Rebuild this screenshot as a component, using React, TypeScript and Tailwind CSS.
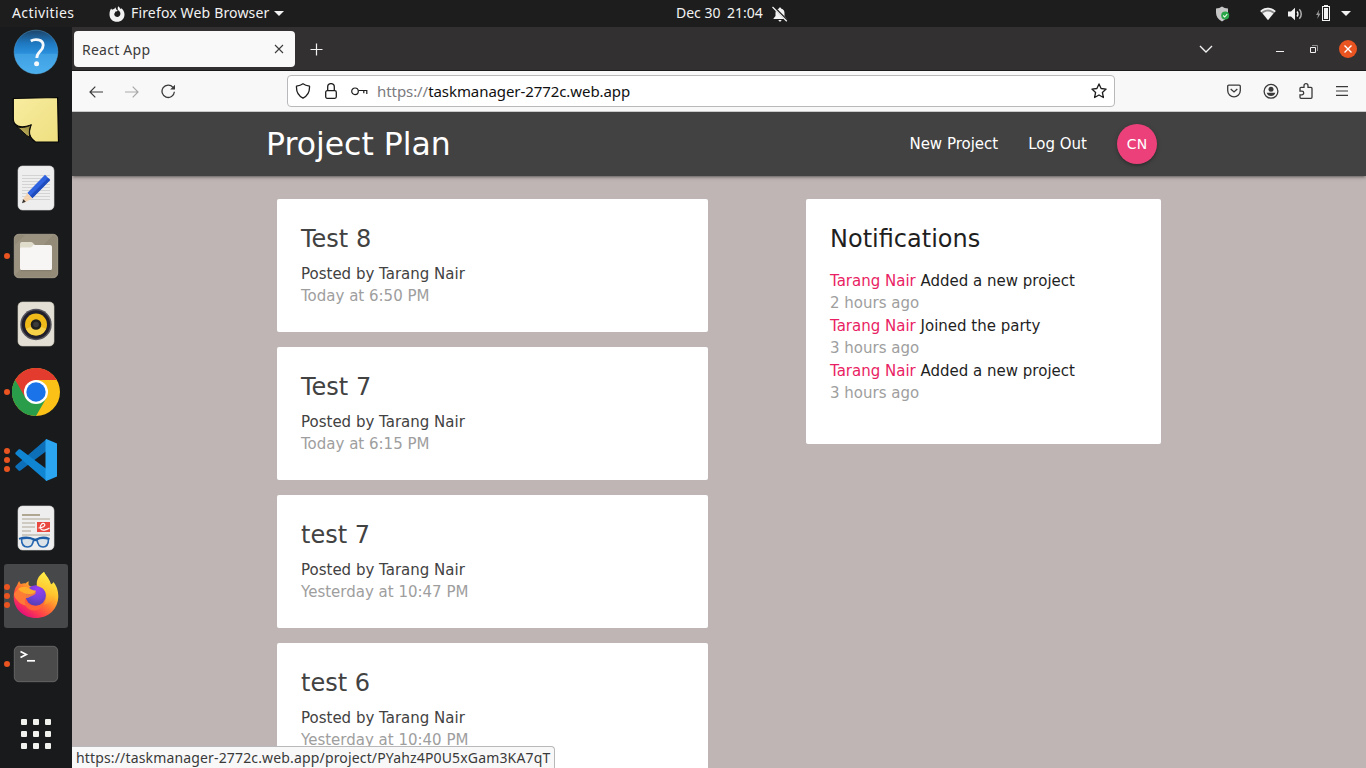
import React from 'react';

const ui = "font-['Noto_Sans',sans-serif]";

const projects = [
  { title: 'Test 8', when: 'Today at 6:50 PM' },
  { title: 'Test 7', when: 'Today at 6:15 PM' },
  { title: 'test 7', when: 'Yesterday at 10:47 PM' },
  { title: 'test 6', when: 'Yesterday at 10:40 PM' },
];

const notifications = [
  { user: 'Tarang Nair', text: 'Added a new project', when: '2 hours ago' },
  { user: 'Tarang Nair', text: 'Joined the party', when: '3 hours ago' },
  { user: 'Tarang Nair', text: 'Added a new project', when: '3 hours ago' },
];

function Caret() {
  return (
    <svg width="10" height="5" viewBox="0 0 10 5" className="shrink-0">
      <path d="M0 0h10L5 5z" fill="#f2f2f2" />
    </svg>
  );
}

function TopBar() {
  return (
    <header className={`flex h-[27px] shrink-0 items-center bg-[#1d1d1d] text-[14px] leading-[25px] text-[#f2f2f2] ${ui}`}>
      <span className="w-[97px] pb-[2px] pl-3 tracking-[0.4px]">Activities</span>
      <div className="flex w-[579px] items-center pl-3">
        <svg width="16" height="16" viewBox="0 0 16 16" className="mr-[6px]">
          <path
            d="M9.3 0.2c1 .8 1.7 1.7 2 2.7l.9-.7c1.8 1.200 3.300 3.300 3.300 6.200 0 4.200-3.300 7.400-7.500 7.400S.5 12.500.5 8.400c0-2.500.7-4.500 1.600-5.900l.9 1.300c.7-.5 1.400-.7 2.200-.7.3-.8 1-1.300 1.600-1.500-.2.9.2 1.800 1.100 2.400l.8.400c-.3.9-1.300 1-2.100 1.200-.5.200-.4.7-.6 1.200-.8.7-.9 1.600-.5 2.500.6 1.100 1.500 1.700 2.700 1.700 1.800 0 3.200-1.400 3.200-3.200 0-1.600-1-2.500-1.900-3.200C8.500 3.500 8.300 1.700 9.300.2z"
            fill="#f2f2f2"
          />
        </svg>
        <span className="mr-[5px] w-[138px] pb-[2px] tracking-[0.16px] whitespace-nowrap">Firefox Web Browser</span>
        <Caret />
      </div>
      <span className="w-[51px] pb-[2px]">Dec 30</span>
      <span className="w-[45px] pb-[2px]">21:04</span>
      <svg width="16" height="16" viewBox="0 0 16 16">
        <path d="M8 1.500a1.300 1.300 0 0 1 1.300 1.200C11.500 3.200 12.500 5 12.500 7v3l2 2.500v.5h-13v-.5l2-2.500V7c0-2 1-3.800 3.200-4.300A1.300 1.300 0 0 1 8 1.500zM6.500 14h3c0 .9-.7 1.500-1.500 1.500S6.500 14.900 6.500 14z" fill="#f2f2f2" />
        <path d="M1.200.6 15.200 14.600" stroke="#1d1d1d" strokeWidth="2.400" />
        <path d="M.5 1 14.800 15.300" stroke="#f2f2f2" strokeWidth="1.300" />
      </svg>
      <div className="ml-auto flex items-center pr-[15px]">
        <svg width="15" height="16" viewBox="0 0 15 16" className="mr-[29px]">
          <path d="M6 .5c1.800 1.300 3.600 1.900 6 2v4c0 4-2 7-6 9-4-2-6-5-6-9v-4c2.400-.1 4.200-.7 6-2z" fill="#c6c6c6" />
          <circle cx="9.200" cy="9.500" r="4" fill="#2aa548" />
          <path d="m7.200 9.500 1.500 1.500 2.500-2.800" stroke="#e8ffe8" strokeWidth="1.100" fill="none" />
        </svg>
        <svg width="16" height="14" viewBox="0 0 16 14" className="mr-[12px]">
          <path d="M.3 4C5-.2 11-.2 15.700 4L8 13.300z" fill="#8a8a8a" />
          <path d="M.3 4C5-.2 11-.2 15.700 4l-1 1.200C10.500 1.500 5.500 1.500 1.300 5.200z" fill="#f2f2f2" />
          <path d="M2.800 6.400C6 3.800 10 3.800 13.200 6.400L8 13z" fill="#f2f2f2" />
        </svg>
        <svg width="16" height="14" viewBox="0 0 16 14" className="mr-[12px]">
          <path d="M0 4.500h3L7 .8v12.400L3 9.500H0z" fill="#f2f2f2" />
          <path d="M9 4.500c1.200 1.300 1.200 3.700 0 5" stroke="#f2f2f2" strokeWidth="1.500" fill="none" />
          <path d="M11.300 2.200c2.600 2.600 2.600 7 0 9.600" stroke="#b0b0b0" strokeWidth="1.500" fill="none" />
        </svg>
        <svg width="15" height="16" viewBox="0 0 15 16" className="mr-[10px] -mt-px">
          <path d="M3.300 4.500 0 10h2l-.7 4L4.500 8.500h-2z" fill="#9a9a9a" />
          <path d="M8 0h4v1h2v15H6V1h2z" fill="#f2f2f2" />
          <path d="M7 2h6v13H7z" fill="#1d1d1d" />
          <path d="M8 3h4v11H8z" fill="#f2f2f2" />
        </svg>
        <Caret />
      </div>
    </header>
  );
}

function HelpIcon() {
  return (
    <svg width="46" height="46" viewBox="0 0 46 46">
      <defs>
        <linearGradient id="help" x1="0" y1="0" x2="0" y2="1">
          <stop offset="0" stopColor="#1d4468" />
          <stop offset=".3" stopColor="#1e78c0" />
          <stop offset=".53" stopColor="#2a8fdc" />
          <stop offset=".55" stopColor="#3f9fe3" />
          <stop offset="1" stopColor="#4cb0ee" />
        </linearGradient>
      </defs>
      <circle cx="23" cy="23" r="21.900" fill="url(#help)" stroke="#5caee2" strokeWidth=".4" />
      <path d="M17.800 12c3.500-2.200 12.400-2.300 12.400 4.300 0 6-6.400 6-6.400 12.700" stroke="#f5f9fc" strokeWidth="2.800" fill="none" />
      <circle cx="23.600" cy="34.800" r="2.500" fill="#f5f9fc" />
    </svg>
  );
}

function NoteIcon() {
  return (
    <svg width="48" height="48" viewBox="0 0 48 48">
      <defs>
        <linearGradient id="note" x1="0" y1="0" x2="1" y2="1">
          <stop offset="0" stopColor="#f8eca0" />
          <stop offset="1" stopColor="#eedf80" />
        </linearGradient>
        <linearGradient id="fold" x1="1" y1="0" x2="0" y2="1">
          <stop offset="0" stopColor="#8f8238" />
          <stop offset="1" stopColor="#d5c56c" />
        </linearGradient>
      </defs>
      <path d="M1.300 2.500 45.600 1.500l.9 44.500H23.500C20 43.500 17 39 17.500 35c.2-2 .8-4 1.500-6-4 1.500-9 2.800-13 1C2.500 28.500 1.300 26 1.300 23z" fill="url(#note)" stroke="#050505" strokeWidth="1.200" />
      <path d="M4.500 30.500c4 2 10 .8 14.500-1.500-2 4-2 8.500-1.200 12.500C13 39 9 33.500 4.500 30.500z" fill="url(#fold)" stroke="#0a0a0a" strokeWidth="1" />
    </svg>
  );
}

function PencilIcon() {
  return (
    <svg width="38" height="46" viewBox="0 0 38 46">
      <rect x="1" y="1" width="36" height="44" rx="4.500" fill="#eeeeee" stroke="#d8d8d8" strokeWidth=".6" />
      <path d="M5 10.500h28M5 13.500h28M5 16.500h28M5 19.500h28M5 22.500h28M5 25.500h28M5 28.500h28M5 31.500h28M5 34.500h28" stroke="#cfcfcf" strokeWidth=".9" />
      <path d="m28 9.800 5.200 5.200-17.900 18.200-5-5.200z" fill="#2f63e0" />
      <path d="m31 13 2.200 2-17.900 18.200-2.200-2.200z" fill="#1f4bbd" />
      <path d="m10.300 28 5 5.200-8 4.600-2-2z" fill="#f3d3b0" />
      <path d="m6.300 34.300 2.500 2.500L5 38.200z" fill="#333" />
    </svg>
  );
}

function FilesIcon() {
  return (
    <svg width="46" height="46" viewBox="0 0 46 46">
      <rect x="1.300" y="1.300" width="43.400" height="43.400" rx="4.500" fill="#938a78" stroke="#aea796" strokeWidth=".8" />
      <path d="M2 12 12 2h28L2 42z" fill="#9e9583" opacity=".7" />
      <path d="M7 11.500c0-2 1-2.500 2.500-2.500H18c1.500 0 2 1 4 3v8H7z" fill="#e0dccc" />
      <path d="M7 16c0-.8.700-1.500 1.500-1.500H17c2.500 0 2.500-2.500 4-2.500h16c1.200 0 2 .8 2 2v21c0 1.500-.8 2.300-2 2.300H9c-1.200 0-2-.8-2-2z" fill="#f7f6f4" />
      <path d="M8 37.600h30" stroke="#6f6858" strokeWidth=".7" />
    </svg>
  );
}

function SpeakerIcon() {
  return (
    <svg width="38" height="46" viewBox="0 0 38 46">
      <rect x="1" y="1" width="36" height="44" rx="4.500" fill="#e3dfd4" stroke="#d2cdc0" strokeWidth=".6" />
      <circle cx="19" cy="23.500" r="15.700" fill="#55545c" />
      <circle cx="19" cy="23.500" r="14.200" fill="#201f2b" />
      <circle cx="19" cy="23.500" r="11" fill="#efba1a" />
      <path d="M9 28a11 11 0 0 0 20 0L19 23.500z" fill="#f7d04a" />
      <circle cx="19" cy="23.500" r="5.300" fill="#20201f" />
      <circle cx="19" cy="23.500" r="2.800" fill="#3b3b3b" />
    </svg>
  );
}

function ChromeIcon() {
  return (
    <svg width="48" height="48" viewBox="0 0 48 48">
      <circle cx="24" cy="24" r="24" fill="#fbc116" />
      <path d="M24 24 34.400 30 24 48A24 24 0 0 1 3.200 12z" fill="#2a9d4a" />
      <path d="M3.200 12A24 24 0 0 1 44.800 12H24l-10.400 18z" fill="#e33b2e" />
      <circle cx="24" cy="24" r="12" fill="#fff" />
      <circle cx="24" cy="24" r="9.700" fill="#1a73e8" />
    </svg>
  );
}

function CodeIcon() {
  return (
    <svg width="42" height="42" viewBox="0 0 42 42">
      <path d="M1.200 26.300 31.500 0v12L5.500 31.500c-.7.500-1.500.5-2 0L.8 28.800c-.8-.8-.6-1.700.4-2.500z" fill="#0d6fb8" />
      <path d="M1.200 15.700 31.500 42V30L5.500 10.500c-.7-.5-1.500-.5-2 0L.8 13.200c-.8.8-.6 1.700.4 2.500z" fill="#1086d2" />
      <path d="M31.300 0 42 4.500v33L31.300 42c-.8-.4-.8-1.500-.8-2V2c0-1 .2-1.700.8-2z" fill="#2ba5f0" />
    </svg>
  );
}

function DocIcon() {
  return (
    <svg width="38" height="46" viewBox="0 0 38 46">
      <rect x="1" y="1" width="36" height="44" rx="4.500" fill="#eeeeee" stroke="#d8d8d8" strokeWidth=".6" />
      <path d="M5 10h18" stroke="#b0a793" strokeWidth="2" />
      <path d="M5 14h28M5 18h13M5 22h13M5 26h9M5 30h28" stroke="#c3bfb4" strokeWidth="1.700" />
      <rect x="20" y="17" width="13" height="10" fill="#e8483f" />
      <path d="M21.500 23c3.500 0 7.500-2 6-4s-5.500 1.500-4 4.500 6 1.500 9-.5" stroke="#fff" strokeWidth="1.200" fill="none" />
      <path d="M4.500 34c2.500-1 8-1.200 12 .5-.3 4.500-2.500 7.500-6 7.500-4 0-6-3-6-8zM20 34.500c3-1.500 8-1.500 11.500-.5 0 5-1.500 8-5.500 8-3.500 0-5.500-3-6-7.500z" fill="#cfdae4" fillOpacity=".6" stroke="#2566b0" strokeWidth="1.600" />
      <path d="M2 33.800c4.500-1.600 10-1.800 14.500.2 1 .5 2.500.5 3.500 0 4-2 8.500-1.800 12.500-.2M16.500 35.800c1-.8 2.500-.8 3.500 0" stroke="#1f5ca3" strokeWidth="1.800" fill="none" />
    </svg>
  );
}

function FirefoxIcon() {
  return (
    <svg width="46" height="48" viewBox="0 0 46 48">
      <defs>
        <linearGradient id="fox" x1=".85" y1=".1" x2=".25" y2=".95">
          <stop offset="0" stopColor="#fff044" />
          <stop offset=".3" stopColor="#ffc02e" />
          <stop offset=".55" stopColor="#ff7a30" />
          <stop offset=".78" stopColor="#ff3f4b" />
          <stop offset="1" stopColor="#e5107a" />
        </linearGradient>
        <linearGradient id="flame" x1=".6" y1="0" x2=".4" y2="1">
          <stop offset="0" stopColor="#fff04a" />
          <stop offset=".6" stopColor="#ffc52e" />
          <stop offset="1" stopColor="#ff8a2c" />
        </linearGradient>
        <radialGradient id="globe" cx=".6" cy=".2" r=".9">
          <stop offset="0" stopColor="#9a3cf5" />
          <stop offset=".5" stopColor="#7542d8" />
          <stop offset="1" stopColor="#4a3fae" />
        </radialGradient>
      </defs>
      <path d="M31 0c1 3 4 5 5 8 1.200 2 1.500 3 1.800 4.500 1-1 2-1 2.700-2.500 3 3.500 4.800 8.500 4.800 14C45.300 37 35.500 46 23 46S.7 37 .7 25c0-5 1-9 3.500-12 .5-1.500 1.200-3 2-4 .5 1.500 1 2.500 1.800 3 1.500-.6 3-.8 4.500-.6 1-1 2.200-1.800 3.500-2.200-.7 1.500-.7 3 0 4.300 2 1.300 4.500 1.500 7.500 1.800C24.500 9.500 26.500 4 31 0z" fill="url(#fox)" />
      <circle cx="22.700" cy="23.500" r="10.200" fill="url(#globe)" />
      <path d="M31 0c-6 4-8 9-7 14 5 1 9 4 9.500 9.500.3 4-1.500 7.500-4 9.500 9-1 13.500-8 11.500-16-1-3.500-2-4.500-3.200-4.500-.3-1.500-.8-3-1.800-4.500-1-3-4-5-5-8z" fill="url(#flame)" />
      <path d="M.9 22C4 16.500 8 15 12 17c2 1 3 2.500 5 3 2 .3 4 0 6 .5-.5 2.500-3.500 3-5.500 4-2 1-3 1.500-4.500 1.500-2 3-1 6 1 8-5-1-8-3-10-6C2 26 1 24 .9 22z" fill="#ff7f34" opacity=".9" />
      <path d="M5 17c4-3.300 9-2.500 12.500 0 1.500 1.200 4 1.300 5.500 1.700-.5 2.300-3.500 2.800-5.500 3.300-4 .5-9-1-12.500-5z" fill="#ffad2a" />
      <path d="M13 26c-.5 3.500 3 8 9.500 8 4 0 7-1.500 9-4.500-.5 5.500-5 9-10.500 9-6.500 0-11-6-8-12.500z" fill="#ff6536" opacity=".9" />
    </svg>
  );
}

function TerminalIcon() {
  return (
    <svg width="46" height="38" viewBox="0 0 46 38">
      <rect x="1.300" y="1.300" width="43.400" height="35.400" rx="4.500" fill="#4b4b4b" stroke="#777" strokeWidth=".7" />
      <path d="m7.500 6.500 5.800 3-5.800 3" stroke="#fff" strokeWidth="1.700" fill="none" />
      <path d="M14 15.800h8" stroke="#fff" strokeWidth="1.700" />
    </svg>
  );
}

function GridIcon() {
  return (
    <div className="grid grid-cols-3 gap-[6px]">
      {Array.from({ length: 9 }, (_, i) => (
        <span key={i} className="size-[6px] rounded-[1px] bg-[#f1f1ee]" />
      ))}
    </div>
  );
}

const dock: { icon: React.ReactNode; dots: number; active?: boolean }[] = [
  { icon: <HelpIcon />, dots: 0 },
  { icon: <NoteIcon />, dots: 0 },
  { icon: <PencilIcon />, dots: 0 },
  { icon: <FilesIcon />, dots: 1 },
  { icon: <SpeakerIcon />, dots: 0 },
  { icon: <ChromeIcon />, dots: 1 },
  { icon: <CodeIcon />, dots: 3 },
  { icon: <DocIcon />, dots: 0 },
  { icon: <FirefoxIcon />, dots: 3, active: true },
  { icon: <TerminalIcon />, dots: 1 },
];

function Dock() {
  return (
    <aside className="flex w-[72px] shrink-0 flex-col items-center overflow-hidden bg-[#191a1c]">
      <div className="-mt-[7px] flex flex-col gap-1">
        {dock.map((item, i) => (
          <div
            key={i}
            className={`relative flex size-16 items-center justify-center rounded-[3px] ${item.active ? 'bg-[#47484a]' : ''}`}
          >
            <div className="absolute top-0 left-0 flex h-full flex-col items-center justify-center gap-[3px]">
              {Array.from({ length: item.dots }, (_, d) => (
                <span key={d} className="size-[6px] rounded-full bg-[#e95420]" />
              ))}
            </div>
            {item.icon}
          </div>
        ))}
      </div>
      <div className="mt-[23px]">
        <GridIcon />
      </div>
    </aside>
  );
}

function TabBar() {
  return (
    <div className={`flex h-[44px] shrink-0 items-center border-b border-[#1b1a1b] bg-[#333031] ${ui}`}>
      <div className="ml-[2px] flex h-9 w-[221px] items-center justify-between rounded-[4px] bg-[#f9f9fa] pr-[11px] pl-2 text-[14px] text-[#3c3c3c]">
        <span className="pt-[2px] tracking-[0.25px]">React App</span>
        <svg width="10" height="10" viewBox="0 0 10 10">
          <path d="m1 1 8 8M9 1 1 9" stroke="#3c3c3c" strokeWidth="1.100" />
        </svg>
      </div>
      <svg width="13" height="13" viewBox="0 0 13 13" className="mt-px ml-[15px]">
        <path d="M6.500.5v12M.5 6.500h12" stroke="#f2f2f2" strokeWidth="1.200" />
      </svg>
      <div className="ml-auto flex items-center pr-[9px]">
        <svg width="14" height="8" viewBox="0 0 14 8" className="mr-[63px]">
          <path d="m1 1 6 6 6-6" stroke="#f2f2f2" strokeWidth="1.400" fill="none" />
        </svg>
        <svg width="8" height="8" viewBox="0 0 8 8" className="mr-[26px]">
          <path d="M0 6.500h8" stroke="#f2f2f2" />
        </svg>
        <svg width="8" height="8" viewBox="0 0 8 8" className="mr-[21px]">
          <path d="M2 .5h5.500V6" stroke="#8f8e8e" fill="none" />
          <path d="M.5 2.500h5v5h-5z" stroke="#f2f2f2" fill="none" />
        </svg>
        <svg width="18" height="18" viewBox="0 0 18 18">
          <circle cx="9" cy="9" r="9" fill="#e95420" />
          <path d="m5.500 5.500 7 7M12.500 5.500l-7 7" stroke="#fff" strokeWidth="1.400" />
        </svg>
      </div>
    </div>
  );
}

function Toolbar() {
  return (
    <div className={`flex h-[41px] shrink-0 items-center border-b border-[#c9c9ca] bg-[#f8f8f9] ${ui}`}>
      <svg width="14" height="12" viewBox="0 0 14 12" className="mt-px ml-[17px]">
        <path d="M14 6H1M6.300.7 1 6l5.300 5.300" stroke="#3a3a3a" strokeWidth="1.200" fill="none" />
      </svg>
      <svg width="14" height="12" viewBox="0 0 14 12" className="mt-px ml-[22px]">
        <path d="M0 6h13M7.700.7 13 6l-5.300 5.300" stroke="#a9a9a9" strokeWidth="1.200" fill="none" />
      </svg>
      <svg width="15" height="15" viewBox="0 0 15 15" className="mt-px ml-[22px]">
        <path d="M13.400 7.800A6.200 6.200 0 1 1 12 3.300L13.200 4.700" stroke="#3a3a3a" strokeWidth="1.300" fill="none" />
        <path d="M14 .8v4.800H9.200z" fill="#3a3a3a" />
      </svg>
      <div className="ml-[111px] flex h-8 w-[828px] items-center rounded-[4px] border border-[#b9b9bb] bg-white">
        <svg width="16" height="16" viewBox="0 0 16 16" className="ml-[7px]">
          <path d="M8 .8c2 1.500 4 2 6.500 2.300.3 5-1.500 9.500-6.500 12-5-2.500-6.800-7-6.500-12C4 2.800 6 2.300 8 .8z" stroke="#1d1d1d" strokeWidth="1.300" fill="none" strokeLinejoin="round" />
        </svg>
        <svg width="12" height="16" viewBox="0 0 12 16" className="ml-[14px]">
          <rect x=".7" y="7.700" width="10.600" height="7.600" rx="1.500" stroke="#1d1d1d" strokeWidth="1.300" fill="none" />
          <path d="M2.700 7.500V3.900a3.300 3.300 0 0 1 6.600 0v3.600" stroke="#1d1d1d" strokeWidth="1.300" fill="none" />
        </svg>
        <svg width="17" height="9" viewBox="0 0 17 9" className="ml-[14px]">
          <circle cx="4" cy="4.300" r="3.300" stroke="#1d1d1d" strokeWidth="1.200" fill="none" />
          <path d="M7.500 3.500h8.300v3.500M12.800 3.500v2.700" stroke="#1d1d1d" strokeWidth="1.200" fill="none" />
        </svg>
        <span className="ml-[9px] text-[15px] tracking-[-0.07px] text-[#7b7b80]">
          https://<span className="text-[#101010]">taskmanager-2772c.web.app</span>
        </span>
        <svg width="16" height="16" viewBox="0 0 16 16" className="mr-[7px] ml-auto">
          <path d="m8 .9 2.100 4.600 5 .6-3.700 3.400 1 5L8 12l-4.400 2.500 1-5L.9 6.100l5-.6z" stroke="#1d1d1d" strokeWidth="1.300" fill="none" strokeLinejoin="round" />
        </svg>
      </div>
      <div className="ml-auto flex items-center pr-[18px]">
        <svg width="14" height="14" viewBox="0 0 14 14" className="mr-[22px]">
          <path d="M1.800 1.200h10.400c.6 0 1.100.5 1.100 1.100v4.200a6.300 6.300 0 0 1-12.600 0V2.300c0-.6.500-1.100 1.100-1.100z" stroke="#3a3a3a" strokeWidth="1.300" fill="none" />
          <path d="m3.700 4.900 3.300 3 3.300-3" stroke="#3a3a3a" strokeWidth="1.300" fill="none" />
        </svg>
        <svg width="16" height="16" viewBox="0 0 16 16" className="mr-[20px]">
          <circle cx="8" cy="8.300" r="6.900" stroke="#3a3a3a" strokeWidth="1.300" fill="none" />
          <circle cx="8" cy="6.300" r="2.500" fill="#3a3a3a" />
          <path d="M3.700 9.800h8.600c-.4 2-2.200 3.300-4.300 3.300s-3.900-1.300-4.300-3.300z" fill="#3a3a3a" />
        </svg>
        <svg width="14" height="16" viewBox="0 0 14 16" className="mr-[23px]">
          <path d="M1 5.300c0-.6.400-.9 1-.9h3V2.700a2 2 0 0 1 4 0v1.700h3c.6 0 1 .4 1 1v8.900c0 .6-.4 1-1 1H2c-.6 0-1-.4-1-1v-2.500h1.900a1.800 1.800 0 0 0 0-3.600H1z" stroke="#3a3a3a" strokeWidth="1.300" fill="none" />
        </svg>
        <svg width="12" height="10" viewBox="0 0 12 10">
          <path d="M0 .7h12M0 5h12M0 9.300h12" stroke="#3a3a3a" strokeWidth="1.200" />
        </svg>
      </div>
    </div>
  );
}

function NavBar() {
  return (
    <nav className="z-10 flex h-16 shrink-0 items-center bg-[#424242] pr-[209px] pl-[194px] text-white shadow-[0_2px_2px_0_rgba(0,0,0,0.14),0_3px_1px_-2px_rgba(0,0,0,0.12),0_1px_5px_0_rgba(0,0,0,0.2)]">
      <span className="text-[31.5px]">Project Plan</span>
      <span className="mr-[30px] ml-auto">New Project</span>
      <span className="mr-[30px]">Log Out</span>
      <span className="flex size-10 items-center justify-center rounded-full bg-[#ec407a] text-[14px] tracking-[0.2px] shadow-[0_2px_2px_0_rgba(0,0,0,0.14),0_1px_5px_0_rgba(0,0,0,0.2)]">
        CN
      </span>
    </nav>
  );
}

function Page() {
  return (
    <main className="relative flex min-h-0 flex-1 flex-col overflow-hidden bg-[#bfb5b4] font-['DejaVu_Sans',sans-serif] text-[15px] leading-[22.5px]">
      <NavBar />
      <div className="flex items-start pt-[23px] pl-[205px]">
        <section className="flex w-[431px] flex-col gap-[15px]">
          {projects.map((p) => (
            <article key={p.title} className="h-[133px] rounded-[2px] bg-white p-6 text-[#424242]">
              <h2 className="mb-2 text-[24px] leading-8">{p.title}</h2>
              <p>Posted by Tarang Nair</p>
              <p className="-mt-px text-[#9e9e9e]">{p.when}</p>
            </article>
          ))}
        </section>
        <section className="ml-[98px] h-[245px] w-[355px] rounded-[2px] bg-white p-6 text-[#1f1f1f]">
          <h2 className="mb-[15px] text-[24px] leading-8">Notifications</h2>
          <ul>
            {notifications.map((n, i) => (
              <li key={i}>
                <span className="text-[#e91e63]">{n.user}</span> {n.text}
                <p className="-mt-px mb-px text-[#9e9e9e]">{n.when}</p>
              </li>
            ))}
          </ul>
        </section>
      </div>
      <div className={`absolute bottom-0 left-0 z-20 h-[22px] w-[483px] overflow-hidden rounded-tr-[4px] border-t border-r border-[#b9b9bb] bg-[#f8f8f9] pl-1 text-[14px] leading-[22px] tracking-[0.155px] whitespace-nowrap text-[#3a3a3a] ${ui}`}>
        https://taskmanager-2772c.web.app/project/PYahz4P0U5xGam3KA7qT
      </div>
    </main>
  );
}

export default function App() {
  return (
    <div className="flex h-screen w-screen flex-col overflow-hidden">
      <TopBar />
      <div className="flex min-h-0 flex-1">
        <Dock />
        <div className="flex min-w-0 flex-1 flex-col">
          <TabBar />
          <Toolbar />
          <Page />
        </div>
      </div>
    </div>
  );
}
